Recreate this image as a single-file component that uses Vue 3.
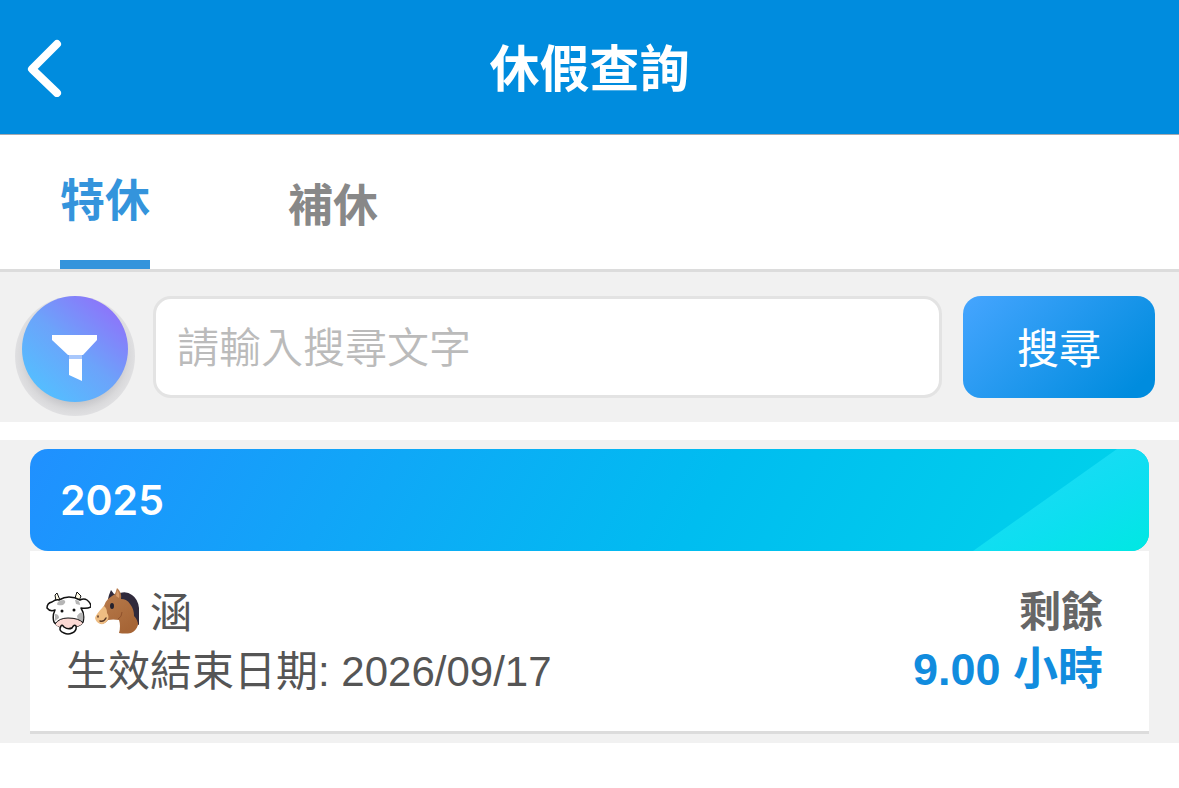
<script setup>
import { ref } from 'vue'

const tabs = [
  { id: 'annual', label: '特休' },
  { id: 'comp', label: '補休' },
]
const active = ref('annual')
const keyword = ref('')
</script>

<template>
  <div class="page">
    <header class="bar">
      <button class="back" type="button" aria-label="返回">
        <svg width="36" height="60" viewBox="0 0 36 60" aria-hidden="true">
          <path d="M31 7 6 32 31 56" fill="none" stroke="#fff" stroke-width="8" stroke-linecap="round" stroke-linejoin="round" />
        </svg>
      </button>
      <h1 class="title">休假查詢</h1>
    </header>

    <nav class="tabs">
      <button
        v-for="tab in tabs"
        :key="tab.id"
        type="button"
        class="tab"
        :class="{ active: tab.id === active }"
        @click="active = tab.id"
      >{{ tab.label }}</button>
    </nav>

    <form class="search" @submit.prevent>
      <button class="filter" type="button" aria-label="篩選">
        <svg width="120" height="120" viewBox="0 0 120 120" aria-hidden="true">
          <defs>
            <linearGradient id="disc" x1="0.2" y1="0.9" x2="0.85" y2="0.15">
              <stop offset="0" stop-color="#55bdff" />
              <stop offset="0.5" stop-color="#6ca3fa" />
              <stop offset="1" stop-color="#8b77fa" />
            </linearGradient>
            <radialGradient id="shade">
              <stop offset="0.75" stop-color="#c4c4c8" />
              <stop offset="0.9" stop-color="#d9d9db" />
              <stop offset="1" stop-color="#e0e0e2" />
            </radialGradient>
          </defs>
          <circle cx="60" cy="60" r="60" fill="url(#shade)" />
          <circle cx="60" cy="53" r="53" fill="url(#disc)" />
          <path d="M37 39H82V44L68 59H53L37 44ZM54 63H67V85L54 79Z" fill="#fff" />
          <path d="M54 59H67V63H54Z" fill="#a9c8fc" />
        </svg>
      </button>
      <input v-model="keyword" class="field" type="text" placeholder="請輸入搜尋文字" aria-label="請輸入搜尋文字" />
      <button class="submit" type="submit">搜尋</button>
    </form>

    <main class="list">
      <article class="card">
        <h2 class="year">
          <svg class="shine" viewBox="0 0 176 102" preserveAspectRatio="none" aria-hidden="true">
            <defs>
              <linearGradient id="glow" x1="0.3" y1="0.2" x2="1" y2="1">
                <stop offset="0" stop-color="#1bdaf6" />
                <stop offset="0.5" stop-color="#0ddff0" />
                <stop offset="1" stop-color="#00e8e2" />
              </linearGradient>
            </defs>
            <path d="M0 102 144 0H176V102Z" fill="url(#glow)" />
          </svg>
          <span class="label">2025</span>
        </h2>
        <div class="body">
          <div class="info">
            <p class="name">
              <svg width="45" height="48" viewBox="0 -1 45 48" aria-hidden="true">
                <path d="M10 13 9 7 11 5 14 12ZM29 10 31 4 35 8 33 13Z" fill="#fffbe6" stroke="#111" stroke-width="1" stroke-linejoin="round" />
                <path d="M13 12Q18 9 23 9 29 9 34 12 38 10 41 12 45 15 45 19 41 21 35 20 39 26 37 34 34 39 22 40 12 40 8 34 6 28 9 22 4 24 1 20 1 15 6 14 10 11 13 12Z" fill="#fff" stroke="#111" stroke-width="1.500" stroke-linejoin="round" />
                <path d="M11 16Q12 12 18 12 21 14 17 17 11 18 11 16ZM29 12Q34 12 34 17L30 16ZM31 28Q35 22 37 26 38 31 36 34L32 33ZM9 26Q13 26 13 30L9 33Z" fill="#b5b5b5" />
                <path d="M9 36Q13 30 22 30 33 30 37 35 34 39 22 40 12 40 9 36Z" fill="#fbd9d4" />
                <path d="M9 36Q13 30 22 30 33 30 37 35" fill="none" stroke="#111" stroke-width="1" />
                <path d="M15 38Q12 43 18 45 22 47 26 45 31 43 30 38 28 36 26 40 22 42 18 39 16 36 15 38Z" fill="#fff" stroke="#111" stroke-width="1.500" />
                <circle cx="16" cy="23" r="1.500" fill="#111" />
                <circle cx="28" cy="22" r="1.500" fill="#111" />
              </svg>
              <svg width="45" height="48" viewBox="0 -1 45 48" aria-hidden="true">
                <defs>
                  <linearGradient id="coat" x1="0" y1="0" x2="0.6" y2="1">
                    <stop offset="0" stop-color="#bb7f50" />
                    <stop offset="1" stop-color="#a66536" />
                  </linearGradient>
                </defs>
                <path d="M14 11 15 7 17 2 20 6 26 5Q33 3 38 7 44 11 45 20V37L38 34 25 12Z" fill="#302a3c" />
                <path d="M14 11 18 8 21 6 23 0Q28 4 27 11 33 11 36 16 40 21 40 28 44 32 44 37 42 43 37 45 31 46 25 45 27 38 25 32 19 31 14 32 11 36 7 36 2 34 2 29L10 18Q11 14 14 11Z" fill="url(#coat)" />
                <path d="M10 18Q13 20 13 25 16 29 13 33 10 37 7 36 2 35 1 30 2 26 10 18Z" fill="#eebd83" />
                <path d="M22 8 23 2Q26 5 25 10Z" fill="#d99b6a" />
                <path d="M24 31Q28 29 28 24" fill="none" stroke="#8f522d" stroke-width="1" />
                <ellipse cx="18" cy="18" rx="2" ry="3" fill="#24212e" />
                <path d="M4 28V29M6 33Q10 34 12 30" fill="none" stroke="#593927" stroke-width="1.500" stroke-linecap="round" />
              </svg>
              <span class="who">涵</span>
            </p>
            <p class="date">生效結束日期: 2026/09/17</p>
          </div>
          <div class="remain">
            <p class="caption">剩餘</p>
            <p class="hours">9.00 小時</p>
          </div>
        </div>
      </article>
    </main>
  </div>
</template>

<style>
body {
  background: #fff;
}
</style>

<style scoped>
.page {
  font-family: "Liberation Sans", "Noto Sans CJK TC", sans-serif;
  font-size: 42px;
  color: #555;
}
.page * {
  box-sizing: border-box;
}
button {
  border: 0;
  padding: 0;
  background: none;
  font: inherit;
  cursor: pointer;
}
svg {
  display: block;
}
h1, h2, p {
  margin: 0;
}
.bar {
  display: grid;
  grid-template-columns: 72px 1fr 72px;
  align-items: center;
  height: 135px;
  background: #008cde;
  background-clip: padding-box;
  border-bottom: 1px solid #a4a9b0;
}
.back {
  padding-left: 26px;
}
.title {
  padding-top: 6px;
  color: #fff;
  font-size: 50px;
  font-weight: 600;
  line-height: 60px;
  text-align: center;
}
.tabs {
  display: flex;
  gap: 138px;
  height: 137px;
  padding: 0 60px;
  border-bottom: 3px solid #dcdcdc;
}
.tab {
  font-size: 45px;
  font-weight: 600;
  color: #888;
}
.tab.active {
  color: #3494dc;
  border-bottom: 9px solid #3494dc;
}
.search {
  display: flex;
  align-items: flex-start;
  height: 150px;
  padding: 24px 24px 0 15px;
  background: #f1f1f1;
}
.filter {
  flex: none;
  margin-right: 18px;
}
.field {
  flex: 1;
  min-width: 0;
  height: 102px;
  margin-right: 21px;
  padding: 4px 21px 0;
  border: 3px solid #e3e3e3;
  border-radius: 18px;
  background: #fff;
  color: #555;
  font: inherit;
  font-weight: 350;
  outline: 0;
}
.field::placeholder {
  color: #bbb;
  opacity: 1;
}
.submit {
  flex: none;
  width: 192px;
  height: 102px;
  padding-bottom: 4px;
  border-radius: 18px;
  background: linear-gradient(135deg, #46a5ff, #008cde 90%);
  color: #fff;
}
.list {
  margin-top: 18px;
  padding: 9px 30px;
  background: #f1f1f1;
}
.year {
  position: relative;
  display: flex;
  align-items: center;
  height: 102px;
  padding: 0 30px;
  overflow: hidden;
  border-radius: 18px;
  background: linear-gradient(120deg, #2090ff, #00bdf0 60%, #00d4ea);
  color: #fff;
  font-family: Inter, sans-serif;
  font-size: 41px;
  font-weight: 600;
}
.shine {
  position: absolute;
  top: 0;
  right: 0;
  width: 176px;
  height: 100%;
}
.label {
  position: relative;
}
.body {
  display: flex;
  justify-content: space-between;
  padding: 30px 46px 30px 16px;
  border-bottom: 3px solid #dcdcdc;
  background: #fff;
}
.name {
  display: flex;
  align-items: center;
  gap: 3px;
  height: 60px;
}
.who {
  margin-left: 8px;
  padding-bottom: 4px;
}
.date {
  padding-top: 2px;
  padding-left: 20px;
  line-height: 58px;
}
.remain {
  padding-top: 2px;
  text-align: right;
  font-weight: 700;
}
.caption {
  color: #666;
  line-height: 60px;
}
.hours {
  color: #118cde;
  font-size: 45px;
  line-height: 54px;
}
</style>
